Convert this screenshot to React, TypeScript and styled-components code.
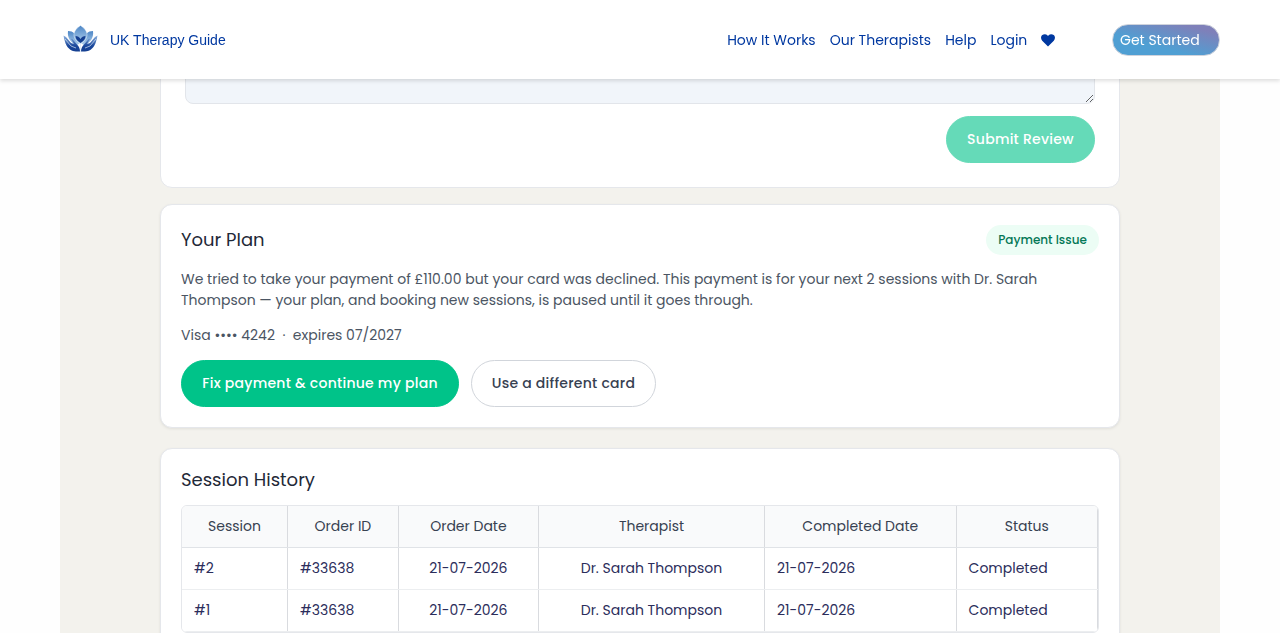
import React from 'react';
import styled, { createGlobalStyle } from 'styled-components';

const GlobalStyle = createGlobalStyle`
  * { box-sizing: border-box; }
  body {
    margin: 0;
    background: #fefefe;
    font-family: Poppins, Inter, 'Open Sans', sans-serif;
    font-size: 14px;
    line-height: 21px;
    overflow: hidden;
  }
  h2, p { margin: 0; }
`;

const Page = styled.div`
  height: 633px;
  overflow: hidden;
`;

const Header = styled.header`
  position: fixed;
  top: 0;
  left: 0;
  z-index: 10;
  width: 100%;
  height: 79px;
  padding: 1px 60px 0 63px;
  display: flex;
  align-items: center;
  background: #fff;
  box-shadow: 0 2px 4px rgba(0, 0, 0, 0.13);
`;

const Brand = styled.a`
  display: flex;
  align-items: center;
  gap: 12px;
  color: #0038a0;
  font: 14px/21px 'Liberation Sans', Arial, sans-serif;

  svg { margin-top: -2px; }
`;

const Nav = styled.nav`
  margin-left: auto;
  display: flex;
  align-items: center;
  color: #0038a0;
`;

const NavLink = styled.a`
  margin-right: 14px;
  white-space: nowrap;
`;

const GetStarted = styled.button`
  width: 108px;
  height: 32px;
  margin-left: 56.7px;
  padding: 0 0 0 7px;
  border: 1px solid #cfd3dc;
  border-radius: 16px;
  background: linear-gradient(15deg, #4f9fd3 35%, #7f80b9 85%);
  color: #fff;
  font: inherit;
  text-align: left;
  white-space: nowrap;
`;

const Content = styled.main`
  width: 1160px;
  height: 700px;
  margin: 0 auto;
  padding: 0 100px;
  background: #f3f2ed;
`;

const Card = styled.section`
  padding: 20px;
  margin-bottom: 20px;
  border: 1px solid #e5e7eb;
  border-radius: 12px;
  background: #fff;
  box-shadow: 0 1px 3px rgba(0, 0, 0, 0.08);
`;

const ReviewCard = styled(Card)`
  height: 188px;
  padding: 24px;
  margin-bottom: 16px;
  display: flex;
  flex-direction: column;
  align-items: flex-end;
  gap: 12px;
  box-shadow: none;
`;

const ReviewInput = styled.textarea`
  width: 100%;
  height: 79px;
  border: 1px solid #e2e5ea;
  border-radius: 8px;
  background: #f1f5fa;
  resize: vertical;
`;

const Button = styled.button<{ $w: number; $outline?: boolean; $faded?: boolean }>`
  width: ${(p) => p.$w}px;
  height: 47px;
  padding: 0;
  border: 1px solid ${(p) => (p.$outline ? '#d1d5db' : '#00c389')};
  border-radius: 24px;
  background: ${(p) => (p.$outline ? '#fff' : '#00c389')};
  color: ${(p) => (p.$outline ? '#374151' : '#fff')};
  opacity: ${(p) => (p.$faded ? 0.6 : 1)};
  font: inherit;
  font-weight: 500;
  letter-spacing: 0.25px;
  white-space: nowrap;
`;

const CardHead = styled.div`
  height: 30px;
  margin-bottom: 14px;
  display: flex;
  align-items: center;
  justify-content: space-between;
`;

const Title = styled.h2`
  color: #1f2937;
  font-size: 18px;
  font-weight: 400;
  line-height: 22px;
`;

const Badge = styled.span`
  width: 113px;
  height: 30px;
  border-radius: 15px;
  background: #ecfdf5;
  color: #047857;
  font-size: 12px;
  font-weight: 500;
  line-height: 30px;
  text-align: center;
  white-space: nowrap;
`;

const Copy = styled.p`
  margin-bottom: 14px;
  color: #4b5563;
  white-space: nowrap;
`;

const Actions = styled.div`
  display: flex;
  gap: 12px;
`;

const Table = styled.div`
  margin-top: 14px;
  border: 1px solid #e5e7eb;
  border-radius: 6px;
  overflow: hidden;
`;

const Row = styled.div<{ $head?: boolean }>`
  display: grid;
  grid-template-columns: 106px 110.8px 140.2px 226px 191.6px 141.4px;
  height: 42px;
  border-bottom: 1px solid ${(p) => (p.$head ? '#e0e3e7' : '#eceef0')};
  background: ${(p) => (p.$head ? '#f9fafb' : '#fff')};
  color: ${(p) => (p.$head ? '#374151' : '#2b2d5b')};
`;

const Cell = styled.div<{ $center?: boolean }>`
  padding: 10px 12px;
  border-right: 1px solid #d9dbdf;
  text-align: ${(p) => (p.$center ? 'center' : 'left')};
  white-space: nowrap;
`;

const Lotus = () => (
  <svg width="35" height="28" viewBox="0 0 35 28">
    <defs>
      <linearGradient id="petal" x1="0" y1="0" x2="0" y2="1">
        <stop offset="0" stopColor="#4d86c6" />
        <stop offset="1" stopColor="#b4d3ee" />
      </linearGradient>
      <linearGradient id="hand" x1="0" y1="0" x2="0" y2="1">
        <stop offset="0" stopColor="#8fb4e0" />
        <stop offset="0.65" stopColor="#1a479b" />
        <stop offset="1" stopColor="#153f91" />
      </linearGradient>
    </defs>
    <path d="M5 6c5 0 9 3 12 12l-4 3C8 17 4 13 5 6ZM30 6c-5 0-9 3-12 12l4 3c5-4 9-8 8-15Z" fill="url(#petal)" />
    <path d="M17.500 .5c4.500 3 7 6.500 6.500 10.500-.5 3.500-3.500 6-6.500 8-3-2-6-4.500-6.500-8C10.500 7 13 3.500 17.500 .5Z" fill="url(#petal)" stroke="#fff" strokeWidth=".4" />
    <path d="M12.500 11c2 0 4 1 5 3 1-2 3-3 5-3 0 3-2 5-5 7-3-2-5-4-5-7Z" fill="#153f91" />
    <path d="M.5 10.500 3 12l5 6 3 1-3-5 1-.5 5 6c2 2 3 4 3 7-6 0-9-.5-11-3C3 21 1.500 16 .5 10.500ZM34.500 10.500 32 12l-5 6-3 1 3-5-1-.5-5 6c-2 2-3 4-3 7 6 0 9-.5 11-3 3-2.500 4.500-7.500 5.500-13Z" fill="url(#hand)" />
    <path d="m2 14 6 7 5 2M33 14l-6 7-5 2M17.500 18.500V27" fill="none" stroke="#d8e7f6" strokeWidth=".7" />
  </svg>
);

const Heart = () => (
  <svg width="14" height="13" viewBox="0 0 14 13">
    <path d="M7 12.500 1.200 6.700C-.4 5-.3 2.400 1.300 1.100 2.900-.2 5.200 0 6.600 1.500L7 2l.4-.5C8.800 0 11.100-.2 12.700 1.100c1.600 1.300 1.700 3.900.1 5.600L7 12.500Z" fill="#0038a0" />
  </svg>
);

const links = ['How It Works', 'Our Therapists', 'Help', 'Login'];
const headings = ['Session', 'Order ID', 'Order Date', 'Therapist', 'Completed Date', 'Status'];
const sessions = ['#2', '#1'].map((n) => [n, '#33638', '21-07-2026', 'Dr. Sarah Thompson', '21-07-2026', 'Completed']);

export default function App() {
  return (
    <Page>
      <GlobalStyle />
      <Header>
        <Brand><Lotus />UK Therapy Guide</Brand>
        <Nav>
          {links.map((l) => <NavLink key={l}>{l}</NavLink>)}
          <Heart />
          <GetStarted>Get Started</GetStarted>
        </Nav>
      </Header>
      <Content>
        <ReviewCard>
          <ReviewInput />
          <Button $w={149} $faded>Submit Review</Button>
        </ReviewCard>
        <Card>
          <CardHead>
            <Title>Your Plan</Title>
            <Badge>Payment Issue</Badge>
          </CardHead>
          <Copy>
            We tried to take your payment of £110.00 but your card was declined. This payment is for your next 2 sessions with Dr. Sarah<br />
            Thompson — your plan, and booking new sessions, is paused until it goes through.
          </Copy>
          <Copy>Visa •••• 4242 &nbsp;·&nbsp; expires 07/2027</Copy>
          <Actions>
            <Button $w={278}>Fix payment &amp; continue my plan</Button>
            <Button $w={185} $outline>Use a different card</Button>
          </Actions>
        </Card>
        <Card>
          <Title>Session History</Title>
          <Table>
            <Row $head>{headings.map((h) => <Cell key={h} $center>{h}</Cell>)}</Row>
            {sessions.map((s) => (
              <Row key={s[0]}>{s.map((v, i) => <Cell key={i} $center={i === 2 || i === 3}>{v}</Cell>)}</Row>
            ))}
          </Table>
        </Card>
      </Content>
    </Page>
  );
}
